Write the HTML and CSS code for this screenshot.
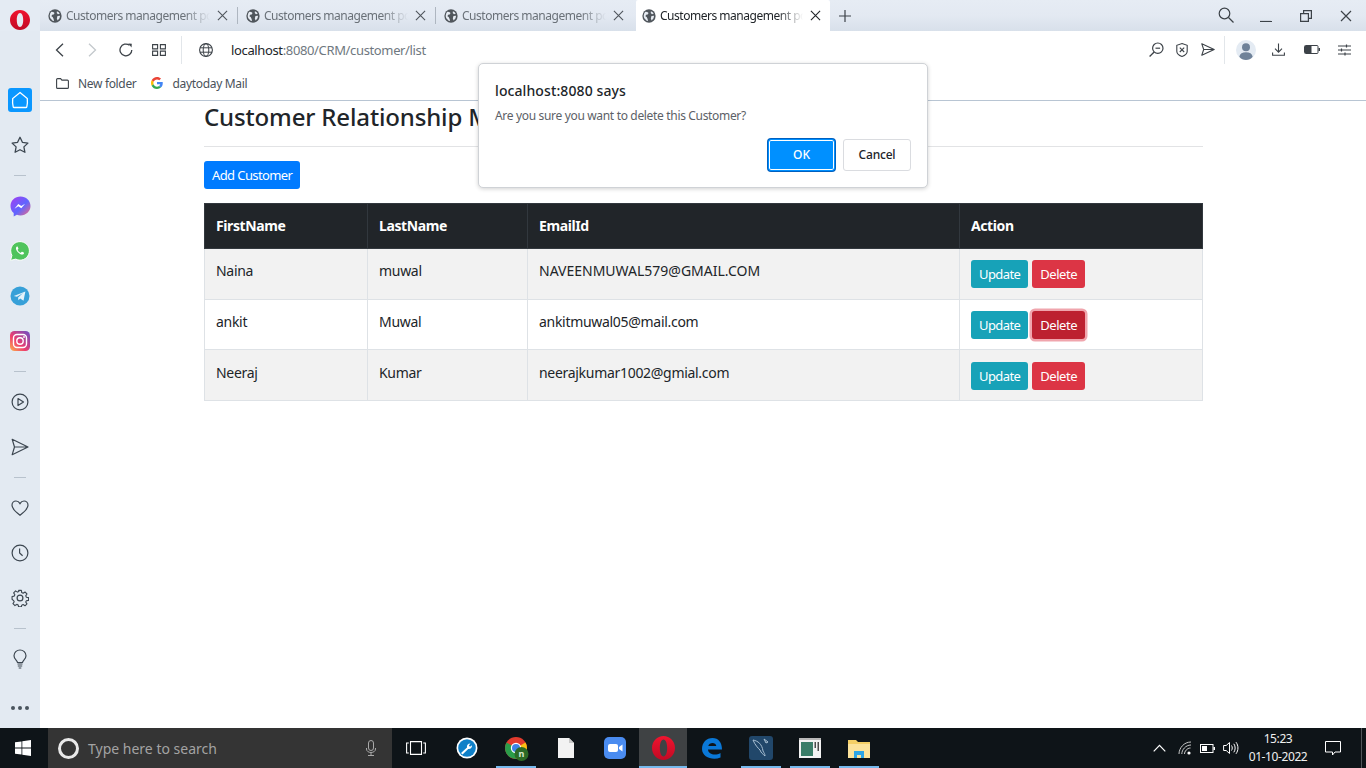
FILE: index.html
```html
<!DOCTYPE html>
<html lang="en">
<head>
<meta charset="utf-8">
<title>Customers management</title>
<link rel="stylesheet" href="styles.css">
</head>
<body>
<svg class="defs" width="0" height="0">
  <defs>
    <symbol id="globe-solid" viewBox="0 0 16 16">
      <circle cx="8" cy="8" r="7.6" fill="#50565c"/>
      <path d="M3.800 3.200l2.200.2 1.500 1.300-1 1.500-1.800.4-.8 1.600 1.400 1 1 1.800.6 2.400-1.200.2L2.600 10.500 1.900 8 2.600 4.800zM10.200 2.600l2 1.200 1.200 1.700-2 .4-1.400-1.200zM10.800 8l3-.3-.6 2.800-2.200 2.700-.9-2.400z" fill="#e6ebf2"/>
    </symbol>
    <symbol id="x-mark" viewBox="0 0 12 12">
      <path d="M1 1l10 10M11 1L1 11" fill="none" stroke="currentColor" stroke-width="1.200"/>
    </symbol>
    <linearGradient id="msg" x1="0" y1="0" x2="1" y2="1">
      <stop offset="0" stop-color="#a63cf0"/><stop offset=".55" stop-color="#5f66ff"/><stop offset="1" stop-color="#ff6a78"/>
    </linearGradient>
    <linearGradient id="insta" x1="0" y1="1" x2="1" y2="0">
      <stop offset="0" stop-color="#fdb64a"/><stop offset=".4" stop-color="#ee3d6e"/><stop offset="1" stop-color="#6a4fc8"/>
    </linearGradient>
    <linearGradient id="opera" x1="0" y1="0" x2="0" y2="1">
      <stop offset="0" stop-color="#f0142f"/><stop offset="1" stop-color="#c10a24"/>
    </linearGradient>
  </defs>
</svg>

<div class="browser">
  <header class="tabstrip">
    <div class="logo-cell">
      <svg width="20" height="20" viewBox="0 0 20 20"><path fill="url(#opera)" fill-rule="evenodd" d="M10 0C4.500 0 0 4.500 0 10s4.500 10 10 10 10-4.500 10-10S15.500 0 10 0zm0 3c2 0 3.200 3.200 3.200 7S12 17 10 17s-3.200-3.200-3.200-7S8 3 10 3z"/></svg>
    </div>
    <div class="tab"><svg class="fav"><use href="#globe-solid"/></svg><span class="tab-title">Customers management portal</span><svg class="tab-x"><use href="#x-mark"/></svg></div>
    <div class="tab"><svg class="fav"><use href="#globe-solid"/></svg><span class="tab-title">Customers management portal</span><svg class="tab-x"><use href="#x-mark"/></svg></div>
    <div class="tab tab-last"><svg class="fav"><use href="#globe-solid"/></svg><span class="tab-title">Customers management portal</span><svg class="tab-x"><use href="#x-mark"/></svg></div>
    <div class="tab tab-active"><svg class="fav"><use href="#globe-solid"/></svg><span class="tab-title">Customers management portal</span><svg class="tab-x"><use href="#x-mark"/></svg></div>
    <svg class="tab-plus" width="12" height="12" viewBox="0 0 12 12"><path d="M6 0v12M0 6h12" stroke="#3c4248" stroke-width="1.200"/></svg>
    <div class="win-controls">
      <svg class="win-search" width="16" height="16" viewBox="0 0 16 16"><circle cx="6.500" cy="6.500" r="5.300" fill="none" stroke="#3c4248" stroke-width="1.200"/><path d="M10.500 10.500l5 5" stroke="#3c4248" stroke-width="1.300"/></svg>
      <svg class="win-btn" width="12" height="12" viewBox="0 0 12 12"><path d="M0 11.500h12" stroke="#3c4248" stroke-width="1.200"/></svg>
      <svg class="win-btn" width="12" height="12" viewBox="0 0 12 12"><path d="M.6 3.600h7.800v7.800H.6zM3.600 3.400V.6h7.800v7.800H8.600" fill="none" stroke="#3c4248" stroke-width="1.200"/></svg>
      <svg class="win-btn win-close" width="12" height="12" viewBox="0 0 12 12"><use href="#x-mark"/></svg>
    </div>
  </header>

  <div class="body-row">
    <nav class="sidebar">
      <div class="side-item"><span class="home-btn"><svg width="18" height="18" viewBox="0 0 18 18"><path d="M9 1.500L16.300 7.600c.3 3 .2 5.600-.5 8.200-.1.5-.4.700-.9.700H3.100c-.5 0-.8-.2-.9-.7-.7-2.600-.8-5.200-.5-8.200z" fill="none" stroke="#fff" stroke-width="1.300"/></svg></span></div>
      <div class="side-item"><svg width="18" height="18" viewBox="0 0 18 18"><path d="M9 1.300l2.400 5 5.500.8-4 3.800 1 5.400L9 13.700l-4.900 2.600 1-5.400-4-3.800 5.500-.8z" fill="none" stroke="#3c4650" stroke-width="1.300" stroke-linejoin="round"/></svg></div>
      <div class="side-sep"></div>
      <div class="side-item"><svg width="21" height="21" viewBox="0 0 21 21"><path d="M10.500.5C5 .5.500 4.500.5 10c0 2.900 1.200 5.400 3.200 7.100v3.400l3.200-1.700c1.100.4 2.300.6 3.600.6 5.500 0 10-4 10-9.400S16 .5 10.500.5z" fill="url(#msg)"/><path d="M4.500 12.700l3.800-4.600 3 2 3.800-2.400-3.800 4.600-3-2z" fill="#fff"/></svg></div>
      <div class="side-item"><svg width="20" height="20" viewBox="0 0 20 20"><path d="M10 .6C4.800.6.700 4.700.7 9.800c0 1.700.4 3.200 1.200 4.600L.6 19.400l5.100-1.300c1.300.7 2.800 1.100 4.300 1.100 5.100 0 9.400-4.200 9.400-9.400S15.100.6 10 .6z" fill="#4fc45c" stroke="#fff" stroke-width="1"/><path d="M7.200 5.500c-.3 0-.9.300-1.100 1-.4 1.100.1 2.800 1.600 4.500 1.500 1.700 3.300 2.600 4.500 2.600.9 0 1.700-.7 1.800-1.400.1-.4 0-.6-.3-.7l-1.500-.8c-.3-.1-.5 0-.6.200l-.6.700c-.2.200-.4.200-.7.100-1.100-.5-2-1.400-2.600-2.500-.1-.3-.1-.5.100-.6l.5-.6c.1-.2.200-.4.100-.6l-.7-1.600c-.1-.2-.3-.3-.5-.3z" fill="#fff"/></svg></div>
      <div class="side-item"><svg width="20" height="20" viewBox="0 0 20 20"><circle cx="10" cy="10" r="9.500" fill="#37a0d8"/><path d="M3.800 9.900l11.600-4.500-1.900 9.400-3.300-2.300-1.800 1.700-.3-2.800 5-4.400-6.200 3.800z" fill="#e4f2fa"/></svg></div>
      <div class="side-item"><svg width="20" height="20" viewBox="0 0 20 20"><rect width="20" height="20" rx="4.500" fill="url(#insta)"/><rect x="3.500" y="3.500" width="13" height="13" rx="3.500" fill="none" stroke="#fff" stroke-width="1.400"/><circle cx="10" cy="10" r="3.200" fill="none" stroke="#fff" stroke-width="1.400"/><circle cx="14" cy="6" r=".9" fill="#fff"/></svg></div>
      <div class="side-sep"></div>
      <div class="side-item"><svg width="18" height="18" viewBox="0 0 18 18"><circle cx="9" cy="9" r="7.900" fill="none" stroke="#3c4650" stroke-width="1.200"/><path d="M7 5.500l5.500 3.500L7 12.500z" fill="none" stroke="#3c4650" stroke-width="1.200" stroke-linejoin="round"/></svg></div>
      <div class="side-item"><svg width="18" height="18" viewBox="0 0 18 18"><path d="M1.200 1.300L17 9 1.200 16.700 3.500 9zM3.500 9H17" fill="none" stroke="#3c4650" stroke-width="1.200" stroke-linejoin="round"/></svg></div>
      <div class="side-sep"></div>
      <div class="side-item"><svg width="18" height="16" viewBox="0 0 18 16"><path d="M9 15.200C4 11.500 1 8.700 1 5.300 1 2.800 2.900 1 5 1c1.700 0 3.100 1 4 2.600C9.900 2 11.300 1 13 1c2.100 0 4 1.800 4 4.300 0 3.400-3 6.200-8 9.900z" fill="none" stroke="#3c4650" stroke-width="1.200"/></svg></div>
      <div class="side-item"><svg width="18" height="18" viewBox="0 0 18 18"><circle cx="9" cy="9" r="7.900" fill="none" stroke="#3c4650" stroke-width="1.200"/><path d="M8.600 4.500V9l3 2.800" fill="none" stroke="#3c4650" stroke-width="1.200"/></svg></div>
      <div class="side-item"><svg width="18" height="18" viewBox="0 0 18 18"><path d="M7.500 1h3l.4 2.300 1.500.7 2-1.300 2.100 2.100-1.300 2 .7 1.500 2.300.4v3l-2.300.4-.7 1.300 1.300 2-2.100 2.100-2-1.300-1.500.7-.4 1.700h-3l-.4-1.900-1.500-.7-2 1.300-2.100-2.100 1.300-2-.7-1.300L.5 10.500v-3l2.300-.4.700-1.500-1.300-2 2.100-2.100 2 1.300 1.500-.7z" transform="translate(.6 .5) scale(.93)" fill="none" stroke="#3c4650" stroke-width="1.200" stroke-linejoin="round"/><circle cx="9" cy="9" r="2.900" fill="none" stroke="#3c4650" stroke-width="1.200"/></svg></div>
      <div class="side-sep"></div>
      <div class="side-item"><svg width="14" height="20" viewBox="0 0 14 20"><path d="M4.500 13.500C4.300 11.500 1 10.300 1 6.800 1 3.500 3.700 1 7 1s6 2.500 6 5.800c0 3.500-3.300 4.700-3.500 6.700z" fill="none" stroke="#3c4650" stroke-width="1.200"/><path d="M4.500 15h5M4.800 17h4.400M5.700 19h2.600" stroke="#3c4650" stroke-width="1.200"/></svg></div>
      <div class="side-item side-dots"><i></i><i></i><i></i></div>
    </nav>

    <div class="main-col">
      <div class="toolbar">
        <svg class="tb tb-back" width="9" height="14" viewBox="0 0 9 14"><path d="M8 .8L1.500 7 8 13.200" fill="none" stroke="#3c4248" stroke-width="1.300"/></svg>
        <svg class="tb tb-fwd" width="9" height="14" viewBox="0 0 9 14"><path d="M1 .8L7.500 7 1 13.200" fill="none" stroke="#c3c8cc" stroke-width="1.300"/></svg>
        <svg class="tb tb-reload" width="14" height="14" viewBox="0 0 14 14"><path d="M12.800 7A5.900 5.900 0 1 1 10.500 2.300" fill="none" stroke="#3c4248" stroke-width="1.300"/><path d="M9.300.6l3.500.2-.3 3.600z" fill="#3c4248"/></svg>
        <svg class="tb tb-grid" width="14" height="12" viewBox="0 0 14 12"><path d="M.6.6h5v4.300h-5zM8.400.6h5v4.300h-5zM.6 7.100h5v4.300h-5zM8.400 7.100h5v4.300h-5z" fill="none" stroke="#3c4248" stroke-width="1.100"/></svg>
        <span class="tb-sep tb-sep-left"></span>
        <svg class="tb tb-globe" width="14" height="14" viewBox="0 0 14 14"><circle cx="7" cy="7" r="6.400" fill="none" stroke="#3c4248" stroke-width="1.100"/><ellipse cx="7" cy="7" rx="2.800" ry="6.400" fill="none" stroke="#3c4248" stroke-width="1"/><path d="M1 4.800h12M1 9.200h12" stroke="#3c4248" stroke-width="1"/></svg>
        <span class="url"><span class="url-host">localhost</span>:8080/CRM/customer/list</span>
        <svg class="tb" width="15" height="15" viewBox="0 0 15 15"><circle cx="8.800" cy="6.200" r="5.200" fill="none" stroke="#3c4248" stroke-width="1.200"/><path d="M6.500 6.200h4.600" stroke="#3c4248" stroke-width="1.200"/><path d="M5.200 10L.6 14.500" stroke="#3c4248" stroke-width="1.300"/></svg>
        <svg class="tb tb-shield" width="12" height="14" viewBox="0 0 12 14"><path d="M6 .6l5.200 1.700v5.900c0 2.500-2.200 4.200-5.200 5.200C3 12.400.8 10.700.8 8.200V2.300z" fill="none" stroke="#3c4248" stroke-width="1.100"/><path d="M3.800 4.600l4.400 4.400M8.200 4.600L3.800 9" stroke="#3c4248" stroke-width="1.100"/></svg>
        <svg class="tb tb-send" width="14" height="13" viewBox="0 0 14 13"><path d="M.8.800l12.400 5.700L.8 12.200 2.700 6.500zM2.700 6.500h10.500" fill="none" stroke="#3c4248" stroke-width="1.100" stroke-linejoin="round"/></svg>
        <span class="tb-sep tb-sep-right"></span>
        <span class="avatar"><svg width="20" height="20" viewBox="0 0 20 20"><circle cx="10" cy="10" r="10" fill="#e4ebf3"/><circle cx="10" cy="7.200" r="4" fill="#6f8299"/><path d="M3.300 16.700c.6-3.200 3-4.500 6.700-4.500s6.100 1.300 6.700 4.500C15 18.800 12.600 20 10 20s-5-1.200-6.700-3.300z" fill="#6f8299"/></svg></span>
        <svg class="tb tb-dl" width="13" height="13" viewBox="0 0 13 13"><path d="M6.500.4V9M3 5.700l3.500 3.500L10 5.700M.6 9.500v2.800h11.800V9.500" fill="none" stroke="#3c4248" stroke-width="1.100"/></svg>
        <svg class="tb tb-batt" width="16" height="9" viewBox="0 0 16 9"><rect x=".5" y=".5" width="13.500" height="8" rx="1" fill="#fff" stroke="#3c4248"/><rect x="1" y="1" width="6.500" height="7" fill="#3c4248"/><rect x="14.500" y="3" width="1.500" height="3" fill="#3c4248"/></svg>
        <svg class="tb tb-set" width="13" height="12" viewBox="0 0 13 12"><path d="M0 2h13M0 6h13M0 10h13" stroke="#3c4248" stroke-width="1"/><path d="M8.500 .5v3M3.500 4.500v3M7 8.500v3" stroke="#3c4248" stroke-width="1.200"/></svg>
      </div>
      <div class="bookmarks">
        <svg class="bm-ico" width="13" height="11" viewBox="0 0 13 11"><path d="M.6 1.600c0-.6.400-1 1-1h3l1.300 1.500h5.500c.6 0 1 .4 1 1v6.300c0 .6-.4 1-1 1H1.600c-.6 0-1-.4-1-1z" fill="none" stroke="#3c4248" stroke-width="1.100"/></svg>
        <span class="bm-text bm-first">New folder</span>
        <svg class="bm-ico" width="12" height="12" viewBox="0 0 48 48"><path fill="#ea4335" d="M24 9.500c3.500 0 6.700 1.200 9.200 3.600l6.900-6.900C35.900 2.400 30.500 0 24 0 14.600 0 6.500 5.400 2.600 13.200l8 6.200C12.400 13.700 17.700 9.500 24 9.500z"/><path fill="#4285f4" d="M47 24.500c0-1.600-.1-3.100-.4-4.500H24v9h12.900c-.6 3-2.200 5.500-4.800 7.200l7.700 6C44.300 37.900 47 31.800 47 24.500z"/><path fill="#fbbc05" d="M10.500 28.600c-.5-1.400-.8-3-.8-4.600s.3-3.200.8-4.600l-8-6.200C.9 16.500 0 20.100 0 24s.9 7.500 2.600 10.800z"/><path fill="#34a853" d="M24 48c6.500 0 11.900-2.100 15.900-5.800l-7.700-6c-2.200 1.400-4.900 2.300-8.200 2.300-6.300 0-11.600-4.200-13.500-9.900l-8 6.200C6.500 42.600 14.600 48 24 48z"/></svg>
        <span class="bm-text bm-second">daytoday Mail</span>
      </div>
      <main class="page">
        <h2 class="title">Customer Relationship Management</h2>
        <hr class="rule">
        <a class="btn btn-blue btn-add">Add Customer</a>
        <table class="grid">
          <colgroup><col class="c1"><col class="c2"><col class="c3"><col class="c4"></colgroup>
          <thead>
            <tr><th>FirstName</th><th>LastName</th><th>EmailId</th><th>Action</th></tr>
          </thead>
          <tbody>
            <tr class="odd"><td>Naina</td><td>muwal</td><td class="caps">NAVEENMUWAL579@GMAIL.COM</td><td><div class="acts"><a class="btn btn-teal">Update</a><a class="btn btn-red">Delete</a></div></td></tr>
            <tr class="even"><td>ankit</td><td>Muwal</td><td>ankitmuwal05@mail.com</td><td><div class="acts"><a class="btn btn-teal">Update</a><a class="btn btn-red btn-focus">Delete</a></div></td></tr>
            <tr class="odd"><td>Neeraj</td><td>Kumar</td><td>neerajkumar1002@gmial.com</td><td><div class="acts"><a class="btn btn-teal">Update</a><a class="btn btn-red">Delete</a></div></td></tr>
          </tbody>
        </table>
      </main>
    </div>
  </div>
</div>

<div class="dialog">
  <div class="dlg-title">localhost:8080 says</div>
  <div class="dlg-msg">Are you sure you want to delete this Customer?</div>
  <div class="dlg-actions">
    <button class="dlg-btn dlg-ok">OK</button>
    <button class="dlg-btn dlg-cancel">Cancel</button>
  </div>
</div>

<footer class="taskbar">
  <div class="start"><svg width="16" height="16" viewBox="0 0 16 16"><path d="M0 2.300l6.500-.9v6.200H0zM7.300 1.300L16 0v7.600H7.300zM0 8.400h6.500v6.200L0 13.700zM7.300 8.400H16V16l-8.700-1.300z" fill="#fff"/></svg></div>
  <div class="search">
    <span class="cortana"></span>
    <span class="search-text">Type here to search</span>
    <svg class="mic" width="10" height="16" viewBox="0 0 10 16"><rect x="2.500" y=".5" width="5" height="10" rx="2.500" fill="none" stroke="#a9a9a9"/><path d="M.5 8v1c0 2.200 2 3.500 4.500 3.500S9.500 11.200 9.500 9V8M5 12.500V15M2 15.500h6" fill="none" stroke="#a9a9a9"/></svg>
  </div>
  <div class="task task-view"><svg width="20" height="14" viewBox="0 0 20 14"><path d="M4.500.6h11v12.800h-11zM2.800 2H.6v10h2.200M17.200 2h2.200v10h-2.200" fill="none" stroke="#fff" stroke-width="1.100"/></svg></div>
  <div class="task task-tool"><svg width="22" height="22" viewBox="0 0 22 22"><circle cx="11" cy="11" r="10.500" fill="#fff"/><circle cx="11" cy="11" r="8.800" fill="#0f80c8"/><path d="M5 16l6-5.500c-.5-1.800.8-4 3.500-4l-1.700 2 1.200 1.300 2-1.600c.3 2.600-2 4.200-3.800 3.700L6.500 17.500z" fill="#fff"/></svg></div>
  <div class="task task-on task-chrome"><svg width="28" height="28" viewBox="-2 -2 28 28"><circle cx="12" cy="12" r="11" fill="#e33b2e"/><path d="M12 12L21.500 6.500A11 11 0 0 1 12 23z" fill="#fbc012"/><path d="M12 12L12 23A11 11 0 0 1 2.500 6.500z" fill="#2a9d4a"/><circle cx="12" cy="12" r="5.200" fill="#fff"/><circle cx="12" cy="12" r="4" fill="#3f84e6"/><circle cx="17.500" cy="18" r="7" fill="#2c6a26"/><text class="chrome-n" x="17.500" y="21">n</text></svg></div>
  <div class="task"><svg width="16" height="20" viewBox="0 0 16 20"><path d="M0 0h11l5 5v15H0z" fill="#f2f2f2"/><path d="M11 0l5 5h-5z" fill="#c9c9c9"/></svg></div>
  <div class="task"><svg width="22" height="22" viewBox="0 0 22 22"><rect width="22" height="22" rx="5" fill="#4a8cf0"/><rect x="4" y="7" width="10" height="8" rx="2" fill="#fff"/><path d="M15 10l3.500-2.500v7L15 12z" fill="#fff"/></svg></div>
  <div class="task task-active"><svg width="23" height="24" viewBox="0 0 20 20" preserveAspectRatio="none"><path fill="url(#opera)" fill-rule="evenodd" d="M10 0C4.500 0 0 4.500 0 10s4.500 10 10 10 10-4.500 10-10S15.500 0 10 0zm0 3c2 0 3.200 3.200 3.200 7S12 17 10 17s-3.200-3.200-3.200-7S8 3 10 3z"/></svg></div>
  <div class="task"><svg width="22" height="22" viewBox="0 0 22 22"><path d="M1 12C1 5.500 5.500 1 11.500 1 17.500 1 21 5.500 21 12.500H7c.3 5 7.500 6.500 12.500 3.500v4.500C11.500 24 1 20 1 12zM7.300 9h8c-.2-4-7.300-4-8 0z" fill="#0a78d7"/></svg></div>
  <div class="task task-on"><svg width="24" height="24" viewBox="0 0 24 24"><rect width="24" height="24" rx="3" fill="#21476a"/><path d="M4 4c5 1 9 4 10 11 1 2 2 3 2 5-2-2-4-3-5-6-2-2-5-5-7-10zM15 3l4 3-2 1z" fill="none" stroke="#a8bfd2"/></svg></div>
  <div class="task task-on"><svg width="22" height="20" viewBox="0 0 22 20"><rect width="22" height="20" fill="#f2f2f2"/><rect y="0" width="22" height="2" fill="#b9b9b9"/><rect x="2" y="4" width="12" height="14" fill="#3a7d68"/><rect x="15.500" y="4" width="1.500" height="6" fill="#4a4a4a"/><rect x="18.500" y="4" width="1.500" height="9" fill="#4a4a4a"/></svg></div>
  <div class="task task-on"><svg width="22" height="19" viewBox="0 0 22 19"><path d="M0 1h8l2 2h12v16H0z" fill="#f4cf66"/><path d="M0 5h22v14H0z" fill="#fce39b"/><path d="M6 12h10v7h-3v-3H9v3H6z" fill="#2ea5e6"/></svg></div>
  <div class="tray">
    <svg class="tray-i tray-chev" width="13" height="8" viewBox="0 0 13 8"><path d="M.7 7.300L6.500 1.300l5.800 6" fill="none" stroke="#fff" stroke-width="1.200"/></svg>
    <svg class="tray-i tray-wifi" width="14" height="14" viewBox="0 0 14 14"><path d="M1 13C1 7 6 1 13 1M3.800 13C3.800 9 7.500 4 13 4M6.500 13c0-2.500 2.500-6 6-6" fill="none" stroke="#c8c8c8"/><circle cx="11" cy="12" r="1.600" fill="#fff"/></svg>
    <svg class="tray-i tray-batt" width="15" height="9" viewBox="0 0 15 9"><rect x=".5" y=".5" width="12.500" height="8" fill="none" stroke="#fff"/><rect x="2" y="2" width="5" height="5" fill="#fff"/><rect x="13.500" y="3" width="1.500" height="3" fill="#fff"/></svg>
    <svg class="tray-i tray-vol" width="16" height="14" viewBox="0 0 16 14"><path d="M.6 4.500h2.600L6.500 1.500v11L3.200 9.500H.6z" fill="none" stroke="#fff"/><path d="M8.500 4.500c1 1.500 1 3.500 0 5M10.800 2.800c1.800 2.500 1.800 6 0 8.500M13 1.200c2.600 3.500 2.600 8 0 11.600" fill="none" stroke="#fff"/></svg>
    <div class="clock"><span>15:23</span><span>01-10-2022</span></div>
    <svg class="tray-i tray-note" width="16" height="15" viewBox="0 0 16 15"><path d="M.5.500h15v10.500H10L7.500 14V11H.5z" fill="none" stroke="#fff"/></svg>
  </div>
</footer>
</body>
</html>
```

FILE: styles.css
```css
* { box-sizing: border-box; }
html, body { margin: 0; padding: 0; }
body {
  width: 1366px;
  height: 768px;
  overflow: hidden;
  position: relative;
  background: #fff;
  font-family: "Noto Sans", "Open Sans", "Liberation Sans", sans-serif;
  color: #212529;
}
.defs { position: absolute; }

.browser { height: 728px; display: flex; flex-direction: column; background: #e3eaf2; }

/* Tab strip */
.tabstrip {
  height: 31px;
  display: flex;
  align-items: center;
  background: linear-gradient(180deg, #e6ecf4 0, #e3e9f2 50%, #d8e0ea 100%);
  flex: none;
}
.logo-cell { width: 40px; height: 31px; padding: 10px 0 0 10px; flex: none; background: #e4ebf3; }
.tab {
  width: 198px;
  height: 31px;
  padding: 0 10px 0 8px;
  display: flex;
  align-items: center;
  flex: none;
  position: relative;
  color: #6a7178;
  font-size: 12px;
  letter-spacing: -.48px;
}
.tab::after {
  content: "";
  position: absolute;
  right: 0;
  top: 7px;
  width: 1px;
  height: 17px;
  background: #aeb6c0;
}
.tab-last::after { display: none; }
.tab-active { width: 194px; margin-left: 2px; padding: 0 9px 0 6px; background: #fff; color: #212529; border-radius: 2px 2px 0 0; }
.tab-active::after { display: none; }
.fav { width: 14px; height: 14px; flex: none; margin-right: 4px; }
.tab-title {
  flex: 1;
  white-space: nowrap;
  overflow: hidden;
  -webkit-mask-image: linear-gradient(90deg, #000 82%, transparent 100%);
  mask-image: linear-gradient(90deg, #000 82%, transparent 100%);
}
.tab-x { width: 11px; height: 11px; flex: none; margin-left: 7px; color: #50565c; }
.tab-active .tab-x { color: #212529; }
.tab-plus { margin-left: 9px; flex: none; }
.win-controls { margin-left: auto; display: flex; align-items: center; height: 31px; padding-right: 14px; }
.win-search { margin-right: 26px; margin-bottom: 2px; }
.win-btn { margin-left: 28px; }
.win-search + .win-btn { margin-left: 0; }
.win-close { color: #3c4248; }

.body-row { flex: 1; display: flex; min-height: 0; }

/* Sidebar */
.sidebar {
  width: 40px;
  flex: none;
  display: flex;
  flex-direction: column;
  align-items: center;
  padding-top: 54px;
  gap: 15px;
}
.side-item { height: 30px; width: 40px; display: flex; align-items: center; justify-content: center; flex: none; }
.side-sep { width: 12px; height: 1px; background: #b8c2cd; flex: none; }
.home-btn { width: 24px; height: 24px; background: #0a97ff; border-radius: 3px; display: flex; align-items: center; justify-content: center; }
.side-dots { margin-top: 4px; gap: 3px; }
.side-dots i { width: 4px; height: 4px; border-radius: 50%; background: #4a545e; display: block; }

.main-col { flex: 1; min-width: 0; display: flex; flex-direction: column; background: #fff; }

/* Toolbar */
.toolbar { height: 36px; display: flex; align-items: center; flex: none; padding: 1px 0 0 15px; }
.tb { flex: none; }
.tb-fwd { margin-left: 24px; }
.tb-reload { margin-left: 22px; }
.tb-grid { margin-left: 19px; }
.tb-sep { width: 1px; height: 28px; background: #e2e6ea; flex: none; }
.tb-sep-left { margin-left: 15px; }
.tb-globe { margin-left: 17px; }
.url { margin-left: 18px; font-size: 13px; letter-spacing: -.36px; color: #6f7880; flex: 1; white-space: nowrap; }
.url-host { color: #212529; }
.tb-shield { margin-left: 12px; }
.tb-send { margin-left: 13px; }
.tb-sep-right { margin-left: 9px; }
.avatar { margin-left: 11px; display: flex; flex: none; }
.tb-dl { margin-left: 16px; }
.tb-batt { margin-left: 19px; }
.tb-set { margin-left: 18px; margin-right: 15px; }

.bookmarks {
  height: 34px;
  display: flex;
  align-items: center;
  flex: none;
  padding: 0 0 1px 16px;
  font-size: 12px;
  letter-spacing: -.33px;
  border-bottom: 1px solid #b8c5d3;
}
.bm-text { color: #4a525a; white-space: nowrap; }
.bm-first { margin-left: 9px; }
.bm-first + .bm-ico { margin-left: 14px; }
.bm-second { margin-left: 10px; }

/* Page */
.page { flex: 1; padding: 0 163px 0 164px; min-height: 0; }
.title { margin: 0; font-size: 24px; line-height: 31px; font-weight: 500; letter-spacing: -.15px; white-space: nowrap; }
.rule { margin: 14px 0; border: 0; border-top: 1px solid #e2e3e5; height: 0; }
.btn {
  display: block;
  height: 28px;
  line-height: 28px;
  padding: 0 8px;
  font-size: 13px;
  letter-spacing: -.6px;
  color: #fff;
  border-radius: 3px;
  white-space: nowrap;
  flex: none;
}
.btn-blue { background: #007bff; }
.btn-teal { background: #17a2b8; }
.btn-red { background: #dc3545; letter-spacing: -.45px; }
.btn-focus { background: #bd2130; box-shadow: 0 0 0 2.500px #f0a5ad; }
.btn-add { width: 96px; margin-bottom: 14px; }
.acts { display: flex; gap: 4px; }

.grid { width: 998px; border-collapse: collapse; table-layout: fixed; font-size: 14px; }
.c1 { width: 163px; }
.c2 { width: 160px; }
.c3 { width: 432px; }
.c4 { width: 243px; }
.grid th {
  background: #212529;
  color: #fff;
  text-align: left;
  height: 45px;
  padding: 0 11px 2px;
  border: 1px solid #32383e;
  font-weight: 700;
  font-size: 14px;
  letter-spacing: -.4px;
}
.grid td {
  border: 1px solid #dee2e6;
  padding: 11px 11px 11px;
  height: 51px;
  vertical-align: top;
  line-height: 21px;
  letter-spacing: -.3px;
}
.grid .even td { height: 50px; padding-bottom: 10px; }
.grid .even + .odd td { padding-top: 12px; padding-bottom: 10px; }
.grid td.caps { letter-spacing: 0; }
.odd td { background: #f2f2f2; }

/* Dialog */
.dialog {
  position: absolute;
  left: 478px;
  top: 63px;
  width: 450px;
  height: 125px;
  background: #fff;
  border: 1px solid #cfd2d6;
  border-radius: 5px;
  box-shadow: 0 1px 4px rgba(0, 0, 0, .18);
  padding: 16px 16px 0;
}
.dlg-title { font-size: 14px; line-height: 21px; color: #212529; font-weight: 500; letter-spacing: .1px; }
.dlg-msg { font-size: 12px; line-height: 16px; margin-top: 7px; letter-spacing: -.33px; color: #5c6167; }
.dlg-actions { display: flex; justify-content: flex-end; gap: 8px; margin-top: 15px; }
.dlg-btn { height: 32px; border-radius: 3px; font: 500 12px "Noto Sans", "Open Sans", sans-serif; padding: 0 0 2px; }
.dlg-ok { width: 67px; background: #0090ff; color: #fff; border: 1px solid #0090ff; box-shadow: inset 0 0 0 1px #fff, 0 0 0 1px #0060c0; }
.dlg-cancel { width: 68px; background: #fff; color: #212529; border: 1px solid #dadce0; letter-spacing: -.2px; }

/* Taskbar */
.taskbar {
  height: 40px;
  display: flex;
  align-items: stretch;
  background: #0e1418;
  color: #fff;
  position: relative;
}
.start { width: 48px; display: flex; align-items: center; justify-content: center; flex: none; padding-right: 2px; }
.search { width: 344px; background: #343434; display: flex; align-items: center; padding-left: 10px; flex: none; }
.cortana { width: 21px; height: 21px; border: 3px solid #e8e8e8; border-radius: 50%; flex: none; }
.search-text { margin-left: 9px; font-size: 14px; color: #a3a3a3; flex: 1; }
.mic { margin-right: 16px; }
.task { width: 49px; flex: none; display: flex; align-items: center; justify-content: center; position: relative; }
.task-view { width: 48px; }
.task-tool { width: 51px; padding-left: 2px; }
.task-chrome { width: 50px; }
.task-on::after, .task-active::after {
  content: "";
  position: absolute;
  left: 5px;
  right: 4px;
  bottom: 0;
  height: 2px;
  background: #76b9ed;
}
.task-chrome::after { right: 5px; }
.task-active { background: #3f4244; width: 48px; }
.task-active::after { left: 0; right: 0; }
.chrome-n { font: 700 9px "Noto Sans", sans-serif; fill: #d8e8d0; text-anchor: middle; }
.tray { margin-left: auto; display: flex; align-items: center; padding-right: 25px; position: relative; }
.tray::after { content: ""; position: absolute; right: 4px; top: 0; bottom: 0; width: 1px; background: #50565a; }
.tray-i { flex: none; }
.tray-wifi { margin-left: 12.500px; }
.tray-batt { margin-left: 7.500px; }
.tray-vol { margin-left: 8.500px; }
.clock { display: flex; flex-direction: column; align-items: center; width: 66px; margin-left: 6px; font-size: 12px; letter-spacing: -.4px; line-height: 18px; color: #f0f0f0; }
.tray-note { margin-left: 14px; }
```
